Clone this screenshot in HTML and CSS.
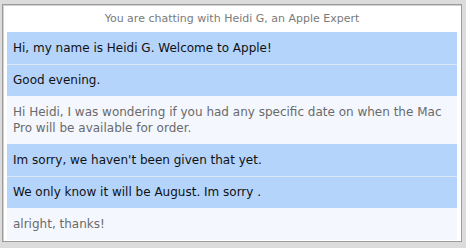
FILE: index.html
```html
<!DOCTYPE html>
<html lang="en">

<head>
    <meta charset="UTF-8">
    <meta name="viewport" content="width=device-width, initial-scale=1.0">

    <link rel="stylesheet" href="styles.css">
    <title>Chat transcript</title>
</head>

<body>

    <div id="chat"> <!-- chat window -->
        <div class="header">You are chatting with Heidi G, an Apple Expert</div>

        <div class="msg agent">Hi, my name is Heidi G. Welcome to Apple!</div>
        <div class="msg agent">Good evening.</div>
        <div class="msg customer">Hi Heidi, I was wondering if you had any specific date on when the Mac Pro will be available for order.</div>
        <div class="msg agent">Im sorry, we haven't been given that yet.</div>
        <div class="msg agent">We only know it will be August. Im sorry .</div>
        <div class="msg customer">alright, thanks!</div>
    </div> <!-- end chat -->

</body>

</html>
```
FILE: styles.css
```css
body {
    margin: 0;
    padding: 4px 4px 4px 2px;
    background-color: #dcdcdc;
    font-family: "DejaVu Sans", Verdana, sans-serif;
}

#chat {
    height: 238px;
    box-sizing: border-box;
    padding: 0 4px 4px 4px;
    background-color: #ffffff;
    border: 1px solid #9c9c9c;
    box-shadow: inset 1px 1px 0 #d0d0d0;
}

.header {
    height: 27px;
    line-height: 27px;
    text-align: center;
    font-size: 11px;
    color: #7a7a7a;
}

.msg {
    padding: 7px 6px 8px 6px;
    line-height: 16px;
    font-size: 12px;
    border-top: 1px solid transparent;
}

.agent {
    background-color: #b4d4fc;
    border-top-color: #b4d4fc;
    color: #111111;
}

.agent + .agent {
    border-top-color: #dbe7f6;
}

.customer {
    background-color: #f4f7fe;
    border-top-color: #f4f7fe;
    color: #6a6a6a;
}
```
